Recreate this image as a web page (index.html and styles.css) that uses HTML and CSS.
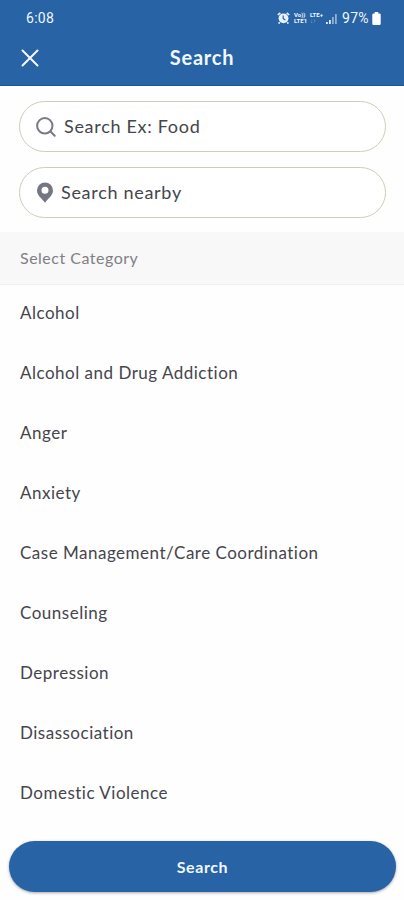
FILE: index.html
```html
<!DOCTYPE html>
<html lang="en">
<head>
    <meta charset="UTF-8">
    <meta name="viewport" content="width=device-width, initial-scale=1.0">
    <title>Search</title>
    <link rel="stylesheet" href="styles.css">
</head>
<body>

<div class="screen">
    <header class="header">
        <div class="status-bar">
            <span class="time">6:08</span>
            <div class="status-icons">
                <svg class="alarm" width="13" height="12" viewBox="0 0 13 12">
                    <circle cx="6.5" cy="6.3" r="4.9" fill="#e9f3ff"/>
                    <path d="M.8 3 3.3 .8M12.2 3 9.7 .8M2.8 10.2 1.6 11.6M10.2 10.2l1.2 1.4" stroke="#e9f3ff" stroke-width="1.6"/>
                    <path d="M6.2 3.6v3l2.2 1.3" fill="none" stroke="#2763a5" stroke-width="1.2"/>
                </svg>
                <div class="network volte"><span>Vo))</span><span>LTE1</span></div>
                <div class="network lte"><span>LTE+</span><span class="dim">↓↑</span></div>
                <svg class="signal" width="11" height="11" viewBox="0 0 11 11">
                    <path d="M0 9h1.8v2H0zM3 7h1.8v4H3z" fill="#dbe9f8"/>
                    <path d="M6 4h1.8v7H6zM9 1h1.8v10H9z" fill="#8fb0d4"/>
                </svg>
                <span class="battery-text">97%</span>
                <svg class="battery" width="9" height="13" viewBox="0 0 9 13">
                    <path d="M2.7 0h3.6v1.4h1.2a1.2 1.2 0 0 1 1.2 1.2v9.2a1.2 1.2 0 0 1-1.2 1.2h-6A1.2 1.2 0 0 1 .3 11.8V2.6a1.2 1.2 0 0 1 1.2-1.2h1.2z" fill="#fff"/>
                </svg>
            </div>
        </div>
        <div class="title-bar">
            <svg class="close" width="18" height="18" viewBox="0 0 18 18">
                <path d="M1.5 1.5l15 15M16.5 1.5l-15 15" stroke="#f4f9ff" stroke-width="2" stroke-linecap="round"/>
            </svg>
            <h1>Search</h1>
        </div>
    </header>

    <div class="fields">
        <div class="field">
            <svg width="20" height="20" viewBox="0 0 20 20" fill="none" stroke="#7a7a83" stroke-width="2" stroke-linecap="round">
                <circle cx="8.8" cy="8.8" r="7.7"/>
                <path d="M14.5 14.5l4.2 4.2"/>
            </svg>
            <span class="field-text food">Search Ex: Food</span>
        </div>
        <div class="field">
            <svg width="18" height="21" viewBox="0 0 18 21">
                <path d="M9 .5a8 8 0 0 0-8 8C1 13.5 6 16.5 9 20.8 12 16.5 17 13.5 17 8.5a8 8 0 0 0-8-8zm0 4.3a3.5 3.5 0 1 1 0 7 3.5 3.5 0 0 1 0-7z" fill="#757683"/>
            </svg>
            <span class="field-text nearby">Search nearby</span>
        </div>
    </div>

    <h2 class="section-title"><span>Select Category</span></h2>

    <ul class="categories">
        <li><span>Alcohol</span></li>
        <li><span>Alcohol and Drug Addiction</span></li>
        <li><span>Anger</span></li>
        <li><span>Anxiety</span></li>
        <li><span>Case Management/Care Coordination</span></li>
        <li><span>Counseling</span></li>
        <li><span>Depression</span></li>
        <li><span>Disassociation</span></li>
        <li><span>Domestic Violence</span></li>
    </ul>

    <div class="footer">
        <button class="search-button">Search</button>
    </div>
</div>

</body>
</html>
```
FILE: styles.css
```css
* {
    box-sizing: border-box;
}
body {
    margin: 0;
    font-family: Lato, "Open Sans", sans-serif;
    color: #45454c;
    background-color: #fefefe;
}
.screen {
    width: 404px;
    height: 900px;
    display: flex;
    flex-direction: column;
    overflow: hidden;
}
.header {
    height: 86px;
    flex: none;
    background-color: #2763a5;
    border-bottom: 1px solid #1d5596;
    color: #f0f7ff;
}
.status-bar {
    height: 36px;
    padding: 0 23px 0 26px;
    display: flex;
    align-items: center;
    justify-content: space-between;
    font-family: Roboto, sans-serif;
    font-size: 14px;
}
.time {
    letter-spacing: 0.3px;
}
.status-icons {
    display: flex;
    align-items: center;
}
.network {
    display: flex;
    flex-direction: column;
    font-size: 6px;
    line-height: 6px;
    font-weight: 700;
    white-space: nowrap;
}
.volte {
    width: 14px;
    margin-left: 4px;
}
.lte {
    width: 14px;
    margin-left: 2px;
}
.dim {
    opacity: 0.5;
}
.signal {
    margin-left: 2px;
}
.battery-text {
    margin: 0 1px 0 5px;
    width: 29px;
    letter-spacing: 0.3px;
}
.title-bar {
    height: 43px;
    padding: 0 21px;
    display: grid;
    grid-template-columns: 18px 1fr 18px;
    align-items: center;
}
.title-bar h1 {
    margin: 0;
    padding-bottom: 2px;
    text-align: center;
    font-size: 20px;
    font-weight: 700;
    letter-spacing: 0.8px;
}
.fields {
    padding: 15px 18px 14px 19px;
    display: flex;
    flex-direction: column;
    gap: 15px;
}
.field {
    height: 51px;
    padding: 0 16px;
    display: flex;
    align-items: center;
    border: 1px solid #cfcdb8;
    border-radius: 26px;
    background-color: #fff;
}
.field-text {
    padding-bottom: 2px;
    font-size: 18px;
    letter-spacing: 0.7px;
}
.food {
    margin-left: 8px;
}
.nearby {
    margin-left: 7px;
}
.section-title {
    height: 53px;
    flex: none;
    margin: 0;
    padding: 0 20px 2px;
    display: flex;
    align-items: center;
    font-size: 16px;
    font-weight: 400;
    letter-spacing: 0.5px;
    color: #808084;
    background-color: #f8f8f8;
    border-bottom: 1px solid #f0f0f0;
}
.categories {
    margin: 0;
    padding: 0 20px;
    list-style: none;
    flex: 1;
    min-height: 0;
}
.categories li {
    height: 59.9px;
    padding-bottom: 4px;
    display: flex;
    align-items: center;
    font-size: 17px;
    letter-spacing: 0.5px;
}
.footer {
    padding: 0 8px 8px 9px;
}
.search-button {
    display: block;
    width: 100%;
    height: 51px;
    padding: 0 0 1px;
    border: none;
    border-radius: 26px;
    background-color: #2763a5;
    color: #f0f7ff;
    font-family: inherit;
    font-size: 16px;
    font-weight: 700;
    letter-spacing: 0.6px;
    box-shadow: 0 1px 3px rgba(0, 0, 0, 0.35);
}
```
